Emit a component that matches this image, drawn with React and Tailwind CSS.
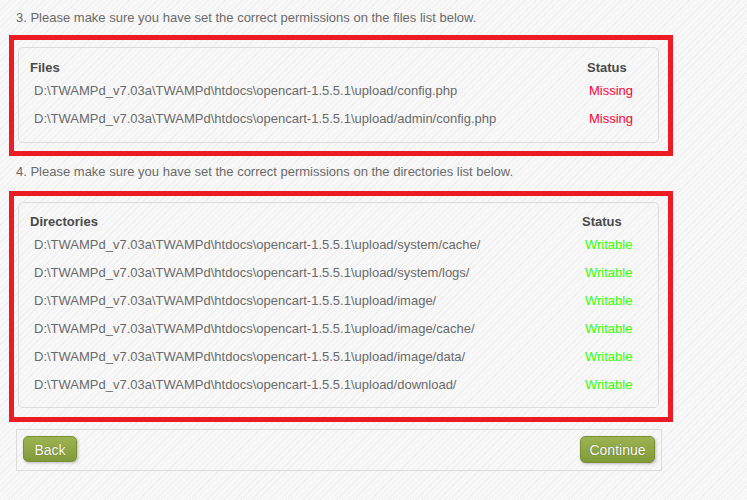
const files = [
  'D:\\TWAMPd_v7.03a\\TWAMPd\\htdocs\\opencart-1.5.5.1\\upload/config.php',
  'D:\\TWAMPd_v7.03a\\TWAMPd\\htdocs\\opencart-1.5.5.1\\upload/admin/config.php',
]

const dirs = [
  'D:\\TWAMPd_v7.03a\\TWAMPd\\htdocs\\opencart-1.5.5.1\\upload/system/cache/',
  'D:\\TWAMPd_v7.03a\\TWAMPd\\htdocs\\opencart-1.5.5.1\\upload/system/logs/',
  'D:\\TWAMPd_v7.03a\\TWAMPd\\htdocs\\opencart-1.5.5.1\\upload/image/',
  'D:\\TWAMPd_v7.03a\\TWAMPd\\htdocs\\opencart-1.5.5.1\\upload/image/cache/',
  'D:\\TWAMPd_v7.03a\\TWAMPd\\htdocs\\opencart-1.5.5.1\\upload/image/data/',
  'D:\\TWAMPd_v7.03a\\TWAMPd\\htdocs\\opencart-1.5.5.1\\upload/download/',
]

function Button({ children, className }) {
  return (
    <button
      className={
        'rounded-[5px] border border-[#7b8f35] bg-[linear-gradient(#9db351,#819a39)] pt-[2px] text-[14px] text-white shadow-[1px_1px_3px_rgba(0,0,0,0.25)] [text-shadow:0_0_1px_rgba(60,70,20,0.8)] ' +
        className
      }
    >
      {children}
    </button>
  )
}

export default function App() {
  return (
    <div className="min-h-[500px] w-full bg-[repeating-linear-gradient(135deg,#f8f8f8_0px,#f8f8f8_3px,#f0f0f0_3px,#f0f0f0_4px)] font-['Liberation_Sans',Arial,sans-serif] text-[13px] text-[#6a6a6a]">
      <div className="h-[35px] pl-[16px] pt-[10px] leading-[16px]">
        3. Please make sure you have set the correct permissions on the files list below.
      </div>

      {/* files */}
      <div className="ml-[9px] h-[121px] w-[664px] border-[5px] border-[#ed1c24] pl-[4px] pr-[9px] pt-[7px]">
        <div className="h-[96px] rounded-[5px] border border-[#dcdcdc] pl-[11px] pt-[11px]">
          <div className="flex h-[17px] items-center font-bold text-[#4a4a4a]">
            <div className="w-[557px]">Files</div>
            <div>Status</div>
          </div>
          {files.map((f) => (
            <div key={f} className="flex h-[28px] items-center pt-[2px]">
              <div className="w-[557px] pl-[4px]">{f}</div>
              <div className="pl-[2px] text-[#ff0033]">Missing</div>
            </div>
          ))}
        </div>
      </div>

      <div className="h-[35px] pl-[16px] pt-[8px] leading-[16px]">
        4. Please make sure you have set the correct permissions on the directories list below.
      </div>

      {/* directories */}
      <div className="ml-[9px] h-[231px] w-[664px] border-[5px] border-[#ed1c24] pl-[4px] pr-[9px] pt-[6px]">
        <div className="h-[206px] rounded-[5px] border border-[#dcdcdc] pl-[11px] pt-[10px]">
          <div className="flex h-[17px] items-center font-bold text-[#4a4a4a]">
            <div className="w-[552px]">Directories</div>
            <div>Status</div>
          </div>
          {dirs.map((d) => (
            <div key={d} className="flex h-[28px] items-center pt-[2px]">
              <div className="w-[552px] pl-[4px]">{d}</div>
              <div className="pl-[3px] text-[#33ff00]">Writable</div>
            </div>
          ))}
        </div>
      </div>

      <div className="ml-[16px] mt-[7px] flex h-[42px] w-[646px] items-start justify-between border border-[#dcdcdc] p-[6px]">
        <Button className="h-[26px] w-[54px]">Back</Button>
        <Button className="h-[27px] w-[75px]">Continue</Button>
      </div>
    </div>
  )
}
